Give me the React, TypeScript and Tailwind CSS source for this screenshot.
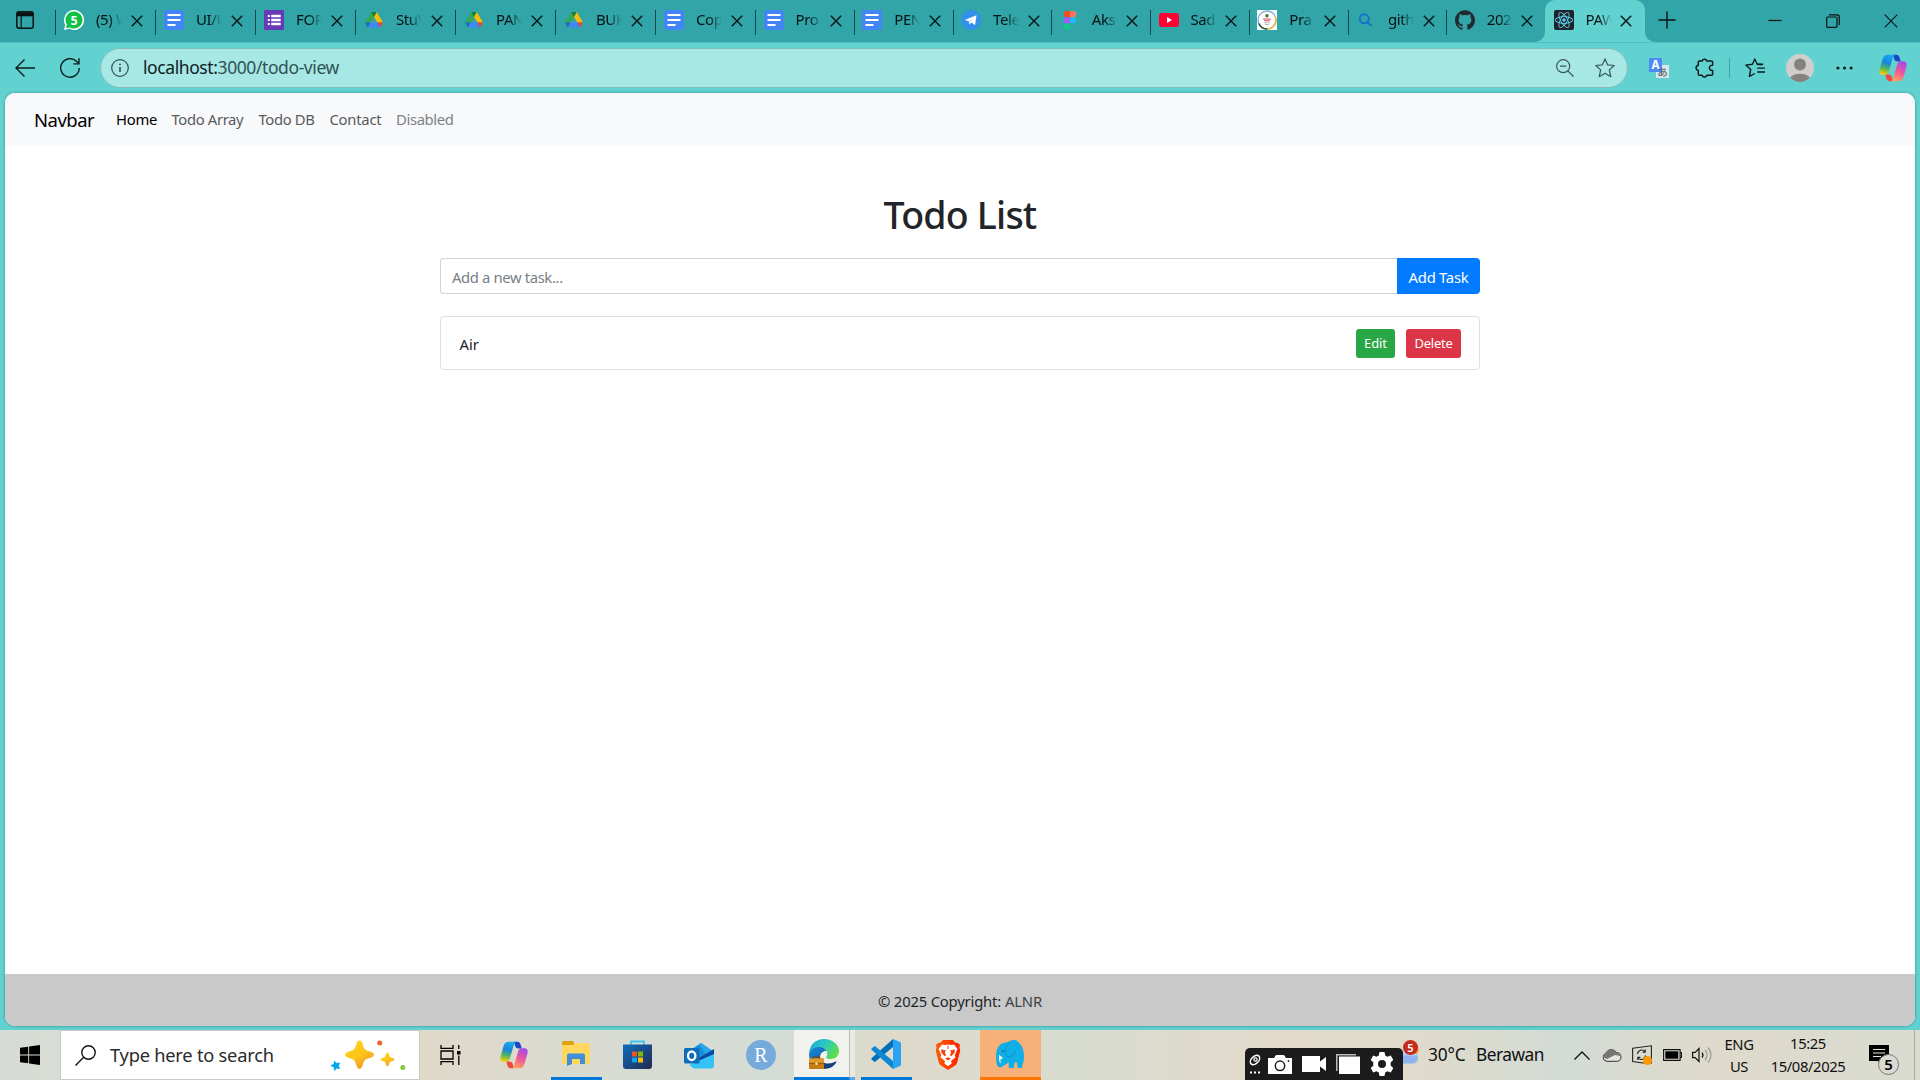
import type { ReactNode } from 'react';
import { SiGithub, SiReact } from 'react-icons/si';

/* ---------- favicons ---------- */

function WhatsAppIcon() {
  return (
    <svg viewBox="0 0 20 20" className="size-5">
      <path d="M10 0a10 10 0 1 1-4.7 18.8L0 20l1.2-5.2A10 10 0 0 1 10 0z" fill="#fff" />
      <path d="M10 1.5a8.5 8.5 0 1 1-4.2 15.9L2 18.2l.8-3.8A8.500 8.500 0 0 1 10 1.500z" fill="#0fc144" />
      <text x="10" y="14.500" textAnchor="middle" fontSize="12.500" fontWeight="700" fill="#fff">5</text>
    </svg>
  );
}

function DocsIcon() {
  return (
    <svg viewBox="0 0 20 20" className="size-5">
      <rect width="20" height="20" rx="1.5" fill="#4285f4" />
      <path d="M3.500 5.100h13M3.500 10.100h13M3.500 15.100h8" stroke="#fff" strokeWidth="2" />
    </svg>
  );
}

function FormsIcon() {
  return (
    <svg viewBox="0 0 20 20" className="size-5">
      <rect width="20" height="20" rx="1" fill="#673ab7" />
      <path d="M7.200 6h9.500M7.200 10h9.500M7.200 14h9.500" stroke="#fff" strokeWidth="2.400" />
      <path d="M3.800 6h2M3.800 10h2M3.800 14h2" stroke="#fff" strokeWidth="2.200" />
    </svg>
  );
}

function DriveIcon() {
  return (
    <svg viewBox="0 0 20 20" className="size-5">
      <path d="M7.300 2 1 12.500 4 17.500 10 7z" fill="#34a853" />
      <path d="M7.300 2h5.500L10 7z" fill="#188038" />
      <path d="M12.800 2 19 12.500h-5.500L10 7z" fill="#fbbc04" />
      <path d="M1 12.500h5.500L4 17.500z" fill="#1967d2" />
      <path d="M6.500 12.500h7L16 17.500H4z" fill="#4285f4" />
      <path d="M13.500 12.500H19L16 17.500z" fill="#ea4335" />
    </svg>
  );
}

function TelegramIcon() {
  return (
    <svg viewBox="0 0 20 20" className="size-5">
      <circle cx="10" cy="10" r="10" fill="#3390ec" />
      <path d="M3.800 10 15.500 5.200 14 15.200l-3.600-2.600-1.900 2-.6-3.400z" fill="#fff" />
      <path d="m7.900 11.200 5.200-3.700-4.200 4.400z" fill="#b9d8f7" />
    </svg>
  );
}

function FigmaIcon() {
  return (
    <svg viewBox="0 0 20 20" className="size-5">
      <path d="M10 1H7a3.100 3.100 0 0 0 0 6.300h3z" fill="#f24e1e" />
      <path d="M10 1h3a3.100 3.100 0 0 1 0 6.300h-3z" fill="#ff7262" />
      <path d="M10 7.300H7a3.100 3.100 0 0 0 0 6.300h3z" fill="#a259ff" />
      <circle cx="13" cy="10.400" r="3.100" fill="#1abcfe" />
      <path d="M10 13.600H7a3.100 3.100 0 1 0 3 3.100z" fill="#0acf83" />
    </svg>
  );
}

function YouTubeIcon() {
  return (
    <svg viewBox="0 0 20 20" className="size-5">
      <rect y="3" width="20" height="14" rx="3" fill="#ff0033" />
      <path d="m8 7 5 3-5 3z" fill="#fff" />
    </svg>
  );
}

function CampusIcon() {
  return (
    <svg viewBox="0 0 20 20" className="size-5">
      <rect width="20" height="20" fill="#fff" />
      <circle cx="10" cy="10" r="9" fill="#fff" stroke="#7fa9df" strokeWidth="1.300" />
      <path d="M18.300 6.500A9 9 0 0 1 10 19" fill="none" stroke="#f0b429" strokeWidth="1.300" />
      <path d="M1.800 13.500A9 9 0 0 0 10 19" fill="none" stroke="#244a2b" strokeWidth="1.400" />
      <circle cx="10" cy="5.800" r="1.700" fill="#3f7a2b" />
      <path d="M6 9h8M7 10.800h6" stroke="#d2505a" strokeWidth="1.100" />
      <path d="M7 12.800h6M8 14.500h4" stroke="#b9b9b9" strokeWidth="1" />
    </svg>
  );
}

function SearchFavicon() {
  return (
    <svg viewBox="0 0 20 20" className="size-5" fill="none" stroke="#1572c9" strokeWidth="1.900">
      <circle cx="8.300" cy="8.800" r="4.500" />
      <path d="m11.600 12.200 3.900 3.800" />
    </svg>
  );
}

function ReactFavicon() {
  return (
    <span className="flex size-5 items-center justify-center rounded-[2px] bg-[#20232a]">
      <SiReact className="size-[18px] text-[#61dafb]" />
    </span>
  );
}

/* ---------- shared icons ---------- */

function CopilotIcon({ id, className }: { id: string; className: string }) {
  return (
    <svg viewBox="0 0 28 28" className={className}>
      <defs>
        <linearGradient id={`${id}-a`} x1="0.500" y1="0" x2="0.300" y2="1">
          <stop offset="0" stopColor="#1aa7ee" />
          <stop offset="0.400" stopColor="#1785dc" />
          <stop offset="0.680" stopColor="#4fb560" />
          <stop offset="1" stopColor="#fbd000" />
        </linearGradient>
        <linearGradient id={`${id}-b`} x1="0.700" y1="0" x2="0.300" y2="1">
          <stop offset="0" stopColor="#a44bea" />
          <stop offset="0.500" stopColor="#f0569a" />
          <stop offset="1" stopColor="#ffa25a" />
        </linearGradient>
      </defs>
      <path d="M14 .8h3.600c1.500 0 2.400 1 2.900 2.500l1.300 4.200h-3.200c-2 0-3-1-3.500-2.800z" fill="#1748c8" />
      <path d="M14 27.200h-3.600c-1.500 0-2.400-1-2.900-2.500l-1.300-4.200h3.200c2 0 3 1 3.500 2.800z" fill="#f04a3e" />
      <path d="M8.800.8h7.700c-1.600.3-2.300 1.800-2.800 3.500l-3.600 12.400c-.7 2.500-2 4-4.400 4H3.500C.8 20.700-.2 18.500.5 15.500L3.600 5C4.500 2.200 6 .8 8.800.8z" fill={`url(#${id}-a)`} />
      <path d="M19.200 27.200h-7.700c1.600-.3 2.300-1.800 2.800-3.500l3.600-12.400c.7-2.500 2-4 4.400-4h2.200c2.700 0 3.700 2.200 3 5.200L24.400 23c-.9 2.800-2.400 4.200-5.200 4.200z" fill={`url(#${id}-b)`} />
    </svg>
  );
}

function CloseGlyph() {
  return (
    <svg viewBox="0 0 12 12" className="size-3" stroke="#0b1a1a" strokeWidth="1.500">
      <path d="m.8.8 10.400 10.400M11.200.8.8 11.200" />
    </svg>
  );
}

/* ---------- tab strip ---------- */

function TabBody({ icon, title }: { icon: ReactNode; title: string }) {
  return (
    <>
      {icon}
      <span className="mb-[2px] ml-[12px] w-[26px] overflow-hidden whitespace-nowrap text-[15px] leading-5 tracking-[-0.400px] text-[#061212] [mask-image:linear-gradient(to_right,black_50%,transparent)]">
        {title}
      </span>
      <span className="ml-[8.500px] mt-px flex">
        <CloseGlyph />
      </span>
    </>
  );
}

const wideTabs: { icon: ReactNode; title: string }[] = [
  { icon: <WhatsAppIcon />, title: '(5) W' },
  { icon: <DocsIcon />, title: 'UI/U' },
  { icon: <FormsIcon />, title: 'FOR' },
  { icon: <DriveIcon />, title: 'StuV' },
  { icon: <DriveIcon />, title: 'PAN' },
  { icon: <DriveIcon />, title: 'BUK' },
  { icon: <DocsIcon />, title: 'Cop' },
];

const narrowTabs: { icon: ReactNode; title: string }[] = [
  { icon: <DocsIcon />, title: 'Pro' },
  { icon: <DocsIcon />, title: 'PEN' },
  { icon: <TelegramIcon />, title: 'Tele' },
  { icon: <FigmaIcon />, title: 'Aks' },
  { icon: <YouTubeIcon />, title: 'Sad' },
  { icon: <CampusIcon />, title: 'Pra' },
  { icon: <SearchFavicon />, title: 'gith' },
  { icon: <SiGithub className="size-5 text-[#24292f]" />, title: '202' },
];

function TabStrip() {
  return (
    <div className="flex h-[42px] bg-[#31a5a8]">
      <div className="flex w-[55px] items-center pb-[2px] pl-4">
        <svg viewBox="0 0 18 18" className="size-[18px]" fill="none" stroke="#0a1212" strokeWidth="1.500">
          <rect x=".8" y=".8" width="16.400" height="16.400" rx="2.500" />
          <path d="M1 3.300h16" strokeWidth="4" />
          <path d="M5.200 5v12" strokeWidth="1.200" />
        </svg>
      </div>
      {wideTabs.map((t, i) => (
        <div key={i} className="flex h-[42px] w-[100px] items-center pb-[2px]">
          <span className="mr-2 mt-[4px] h-[25px] w-px bg-[#12494c]" />
          <TabBody icon={t.icon} title={t.title} />
        </div>
      ))}
      {narrowTabs.map((t, i) => (
        <div key={i} className="flex h-[42px] w-[98.750px] items-center pb-[2px]">
          <span className="mr-[7.500px] mt-[4px] h-[25px] w-px bg-[#12494c]" />
          <TabBody icon={t.icon} title={t.title} />
        </div>
      ))}
      <div className="relative flex h-[42px] w-[100px] items-center rounded-t-[10px] bg-[#62d2d1] pb-[2px] pl-[8.500px]">
        <svg viewBox="0 0 10 10" className="absolute -left-[10px] bottom-0 size-[10px]"><path d="M10 0v10H0A10 10 0 0 0 10 0z" fill="#62d2d1" /></svg>
        <svg viewBox="0 0 10 10" className="absolute -right-[10px] bottom-0 size-[10px]"><path d="M0 0v10h10A10 10 0 0 1 0 0z" fill="#62d2d1" /></svg>
        <TabBody icon={<ReactFavicon />} title="PAW" />
      </div>
      <div className="flex flex-1 items-center justify-between pl-[13px] pr-[22px]">
        <svg viewBox="0 0 18 18" className="mb-[3px] size-[18px]" stroke="#0a1212" strokeWidth="1.400"><path d="M9 .500v17M.500 9h17" /></svg>
        <div className="flex items-center gap-[44px]">
          <svg viewBox="0 0 14 14" className="size-[14px]" stroke="#0a1212" strokeWidth="1.200"><path d="M.5 6.500h13" /></svg>
          <svg viewBox="0 0 14 14" className="size-[14px]" fill="none" stroke="#0a1212" strokeWidth="1.200">
            <rect x=".7" y="3" width="10.300" height="10.300" rx="1" />
            <path d="M3 .8h8a2.300 2.300 0 0 1 2.300 2.300v8" />
          </svg>
          <svg viewBox="0 0 14 14" className="size-[14px]" stroke="#0a1212" strokeWidth="1.100"><path d="m.7.700 12.600 12.600M13.300.700.700 13.300" /></svg>
        </div>
      </div>
    </div>
  );
}

/* ---------- address bar ---------- */

function Toolbar() {
  return (
    <div className="flex h-[51px] items-center border-t border-[#4fc0c1] bg-[#62d2d1] pb-px text-[#0d1c1c]">
      <svg viewBox="0 0 20 18" className="ml-[15px] h-[18px] w-5" fill="none" stroke="currentColor" strokeWidth="1.400">
        <path d="M9.500.500 1 9l8.500 8.500M1 9h19" />
      </svg>
      <svg viewBox="0 0 20 20" className="ml-[25px] size-5" fill="none" stroke="currentColor" strokeWidth="1.400">
        <path d="M19.300 10A9.300 9.300 0 1 1 16.800 3.600L18.800 5.600" />
        <path d="M19 .300v5.600h-5.600" />
      </svg>
      <div className="ml-5 flex h-[40px] w-[1528px] items-center rounded-full border border-[#86bdbb] bg-[#a7e7e5]">
        <svg viewBox="0 0 18 18" className="ml-[10px] size-[18px]" fill="none" stroke="#33504f" strokeWidth="1.200">
          <circle cx="9" cy="9" r="8.300" />
          <path d="M9 8v5" strokeWidth="1.600" />
          <circle cx="9" cy="5.400" r=".6" fill="#33504f" strokeWidth=".7" />
        </svg>
        <span className="mb-px ml-[14px] whitespace-nowrap text-[17.500px] leading-6 tracking-[-0.410px] text-[#0e2222]">
          localhost:<span className="text-[#2f5352]">3000/todo-view</span>
        </span>
        <div className="ml-auto flex items-center gap-[21px] pr-[12px] text-[#3a5a59]">
          <svg viewBox="0 0 18 18" className="size-[18px]" fill="none" stroke="currentColor" strokeWidth="1.200">
            <circle cx="7.200" cy="7.200" r="6.500" />
            <path d="m12 12 5.500 5.500M4 7.200h6.400" />
          </svg>
          <svg viewBox="0 0 20 20" className="size-5" fill="none" stroke="currentColor" strokeWidth="1.250" strokeLinejoin="round">
            <path d="m10 .9 2.700 6 6.500.6-4.900 4.400 1.500 6.800L10 15.300l-5.800 3.400 1.500-6.800L.8 7.500l6.500-.6z" />
          </svg>
        </div>
      </div>
      <svg viewBox="0 0 20 20" className="ml-[21px] size-5">
        <rect x="7" y="7" width="13" height="13" fill="#dfe5e8" />
        <rect width="13" height="14" rx=".8" fill="#4c8bf5" />
        <text x="6.500" y="11" textAnchor="middle" fontSize="11.500" fontWeight="700" fill="#fff">A</text>
        <text x="13.500" y="18" textAnchor="middle" fontSize="10.500" fontWeight="500" fill="#546e7a" fontFamily="Noto Sans CJK JP">あ</text>
      </svg>
      <svg viewBox="0 0 20 20" className="ml-[25px] size-5" fill="none" stroke="currentColor" strokeWidth="1.500" strokeLinejoin="round">
        <path d="M6.500 3h1.600a2.500 2.500 0 0 1 4.800 0h4.700a1 1 0 0 1 1 1v3.200a2.700 2.700 0 1 0 0 5.300v3.800a1 1 0 0 1-1 1h-4.700a2.500 2.500 0 0 1-4.800 0H5.300a1 1 0 0 1-1-1v-3.800a2.700 2.700 0 0 1 0-5.300V4a1 1 0 0 1 1-1z" />
      </svg>
      <span className="ml-[15px] h-5 w-px bg-[#3fa3a4]" />
      <svg viewBox="0 0 20 20" className="ml-[15px] size-5" fill="none" stroke="currentColor" strokeWidth="1.400" strokeLinejoin="round">
        <path d="M17.500 6.800 12.200 6.200 9.800 1 7.400 6.200.800 7.100l4.900 4.400-1.300 7 5.300-3" />
        <path d="M12.200 10.100H20M12.200 14H20M12.200 6.300h6" />
      </svg>
      <svg viewBox="0 0 28 28" className="ml-[21px] size-7">
        <circle cx="14" cy="14" r="14" fill="#d1cfcd" />
        <circle cx="14" cy="10.500" r="6" fill="#858381" />
        <path d="M4 23.500a11 6.500 0 0 1 20 0A14 14 0 0 1 14 28a14 14 0 0 1-10-4.500z" fill="#858381" />
      </svg>
      <svg viewBox="0 0 17 4" className="ml-[22px] h-1 w-[17px]" fill="currentColor">
        <circle cx="1.900" cy="2" r="1.600" /><circle cx="8.500" cy="2" r="1.600" /><circle cx="15.100" cy="2" r="1.600" />
      </svg>
      <CopilotIcon id="cp-bar" className="ml-[26px] size-7" />
    </div>
  );
}

/* ---------- page ---------- */

function Page() {
  return (
    <div className="h-[937px] bg-[#62d2d1] px-[5px] pb-[4px]">
      <div className="flex h-[933px] flex-col overflow-hidden rounded-[10px] bg-white text-[14.800px] text-[#212529] shadow-[0_0_3px_rgba(0,60,60,0.5)]">
        <nav className="flex h-[53px] items-center bg-[#f8f9fb] pl-[29px]">
          <span className="w-[82px] text-[18.500px] tracking-[-0.500px] text-black">Navbar</span>
          <span className="w-[55.500px] tracking-[-0.250px] text-black">Home</span>
          <span className="w-[87px] tracking-[-0.350px] text-[#595a5b]">Todo Array</span>
          <span className="w-[71px] tracking-[-0.360px] text-[#595a5b]">Todo DB</span>
          <span className="w-[66.500px] tracking-[-0.230px] text-[#595a5b]">Contact</span>
          <span className="tracking-[-0.350px] text-[#7d8185]">Disabled</span>
        </nav>
        <main className="mx-auto flex w-[1040px] flex-1 flex-col pt-[45px]">
          <h1 className="text-center text-[37.500px] font-medium leading-[48px] tracking-[-0.800px]">Todo List</h1>
          <div className="mt-[19px] flex h-[36px]">
            <div className="flex flex-1 items-center rounded-l-[4px] border border-r-0 border-[#ced4da] pl-[11px] pt-[2px] tracking-[-0.360px] text-[#777e85]">
              Add a new task...
            </div>
            <button className="w-[83px] rounded-r-[4px] bg-[#007bff] pt-[2px] tracking-[-0.250px] text-white">Add Task</button>
          </div>
          <div className="mt-[22px] flex h-[54px] items-center rounded-[4px] border border-[#dfdfdf] pl-[18.500px] pr-[18px]">
            <span className="flex-1 pt-[2px]">Air</span>
            <button className="h-[29px] w-[39px] rounded-[3px] bg-[#28a745] pt-px text-[13px] tracking-[-0.100px] text-white">Edit</button>
            <button className="ml-[11px] h-[29px] w-[55px] rounded-[3px] bg-[#dc3545] pt-px text-[13px] tracking-[-0.230px] text-white">Delete</button>
          </div>
        </main>
        <footer className="flex h-[52px] items-center justify-center gap-1 bg-[#c9c9c9] pt-[2px] tracking-[-0.180px]">
          <span>© 2025 Copyright:</span>
          <span className="text-[#3d4246]">ALNR</span>
        </footer>
      </div>
    </div>
  );
}

/* ---------- taskbar ---------- */

function Sparkles() {
  return (
    <svg viewBox="0 0 76 31" className="h-[31px] w-[76px]">
      <defs>
        <linearGradient id="spark" x1="0" y1="0" x2=".6" y2="1">
          <stop offset="0" stopColor="#ffd51f" /><stop offset=".6" stopColor="#fdc518" /><stop offset="1" stopColor="#f09a2c" />
        </linearGradient>
      </defs>
      <path d="M29.500.500c1.800 0 2.600 1.600 3.200 3.800 1.400 5 2.200 5.800 7.200 7.200 2.200.6 4 1.400 4 3.200s-1.800 2.600-4 3.200c-5 1.400-5.800 2.200-7.200 7.200-.6 2.200-1.400 3.900-3.200 3.900s-2.600-1.700-3.200-3.900c-1.400-5-2.200-5.800-7.200-7.200-2.200-.6-4-1.400-4-3.200s1.800-2.600 4-3.200c5-1.400 5.800-2.200 7.200-7.200.6-2.200 1.400-3.800 3.200-3.800z" fill="url(#spark)" />
      <path d="M57.500 12.500c.9 0 1.200 1 1.500 2 .7 2.300 1 2.700 3.400 3.400 1 .3 2 .7 2 1.500s-1 1.200-2 1.500c-2.400.7-2.700 1.100-3.400 3.400-.3 1-.6 2-1.500 2s-1.200-1-1.500-2c-.7-2.300-1-2.700-3.400-3.400-1-.3-2-.7-2-1.500s1-1.200 2-1.500c2.400-.7 2.700-1.100 3.400-3.400.3-1 .6-2 1.500-2z" fill="url(#spark)" />
      <path d="m4 20.500 2.500 2.600 3.600-.6-1.400 3.400 1.600 3.200-3.500-.7L4 31l-.3-3.700L.200 25.500l3.500-1.400z" fill="#00a4ef" />
      <circle cx="49.700" cy="3" r="2.500" fill="#f1622c" />
      <circle cx="72.800" cy="27.500" r="2.500" fill="#8cc63f" />
    </svg>
  );
}

function FolderIcon() {
  return (
    <svg viewBox="0 0 28 26" className="h-[26px] w-7">
      <path d="M0 2a2 2 0 0 1 2-2h9l2 4H0z" fill="#dfa000" />
      <path d="M0 4h11l2-2h13a2 2 0 0 1 2 2v19H0z" fill="#ffd660" />
      <path d="M5 25V14.500A2 2 0 0 1 7 12.500h14a2 2 0 0 1 2 2V23h-5v-5h-8v5z" fill="#3f8fd9" />
    </svg>
  );
}

function StoreIcon() {
  return (
    <svg viewBox="0 0 29 29" className="size-[29px]">
      <defs><linearGradient id="store" x1="0" y1="0" x2="1" y2="1"><stop offset="0" stopColor="#0f6cbd" /><stop offset="1" stopColor="#232a50" /></linearGradient></defs>
      <path d="M8 7V1.500h13V7" fill="none" stroke="#3cc5f1" strokeWidth="1.800" />
      <path d="M0 4.500h29V26a3 3 0 0 1-3 3H3a3 3 0 0 1-3-3z" fill="url(#store)" />
      <path d="M9 11.500h5v5H9z" fill="#f25022" /><path d="M15 11.500h5v5h-5z" fill="#7fba00" />
      <path d="M9 17.500h5v5H9z" fill="#00a4ef" /><path d="M15 17.500h5v5h-5z" fill="#ffb900" />
    </svg>
  );
}

function OutlookIcon() {
  return (
    <svg viewBox="0 0 30 27" className="h-[27px] w-[30px]">
      <path d="M5 9 17 1l13 9v3L17 20 5 12z" fill="#1490df" />
      <path d="m15 2.200 2-1.200 13 9-7 4z" fill="#28a8ea" />
      <path d="m10 19 20-12v6L12 24z" fill="#0a4a9c" />
      <path d="M30 12v11.500a3 3 0 0 1-3 3H10L5 23z" fill="#35c3f5" />
      <rect y="6" width="15.500" height="15.500" rx="1.500" fill="#0f6cbd" />
      <ellipse cx="7.700" cy="13.800" rx="3.700" ry="4.300" fill="none" stroke="#fff" strokeWidth="2.300" />
    </svg>
  );
}

function EdgeWorkIcon() {
  return (
    <svg viewBox="0 0 30 30" className="size-[30px]">
      <defs>
        <linearGradient id="edge-top" x1="0" y1="0" x2="1" y2=".5"><stop offset="0" stopColor="#1a9fd8" /><stop offset=".5" stopColor="#2ac8c4" /><stop offset="1" stopColor="#5ddc50" /></linearGradient>
        <linearGradient id="edge-mid" x1="0" y1="0" x2=".6" y2="1"><stop offset="0" stopColor="#1a8fdd" /><stop offset="1" stopColor="#0c55a8" /></linearGradient>
      </defs>
      <path d="M15 11.500c-2.500 1-4 3.500-4 6 0 4.500 3.500 7 8 7 3.200 0 5.500-1 7.500-2 .6-.3 1.200.2.800.8C25 27.500 20.500 30 15 30 9 30 6 26 6 20z" fill="#153f78" />
      <path d="M0 15c1-5 5-7.500 9.500-7.500 4.500 0 7 2 7.800 4.500-3.500-.3-6.300 2.500-6.300 5.500 0 4 2 7 5 9L10 30C4 28 0 22 0 15z" fill="url(#edge-mid)" />
      <path d="M0 14C.800 5.500 7 0 15 0c9 0 15 6 15 12 0 5-3.800 8-8.300 8-3.500 0-4.900-1-4.500-2 1.300-1.500 1.300-3.500.600-5.500-1-3-4.300-4.500-7.800-4.500-4.500 0-8 2.500-10 6z" fill="url(#edge-top)" />
      <rect y="19.500" width="15" height="10.500" fill="#c77b16" />
      <path d="M0 19.500h15V24H0z" fill="#e29a2b" />
      <path d="M4.500 19.500v-1.700h6v1.700" fill="none" stroke="#7c4a0c" strokeWidth="1.200" />
      <path d="M0 24.300h15" stroke="#7c4a0c" strokeWidth=".8" />
      <circle cx="7.500" cy="24.800" r="1.300" fill="#ffe28a" />
    </svg>
  );
}

function CodeIcon() {
  return (
    <svg viewBox="0 0 30 30" className="size-[30px]">
      <path d="M22 0v8L4.500 22.500c-.5.400-1 .4-1.500 0L.800 20.700c-.6-.5-.6-1.300 0-1.800z" fill="#0070b8" />
      <path d="M22 30v-8L4.500 7.500c-.5-.4-1-.4-1.500 0L.800 9.300c-.6.500-.6 1.300 0 1.800z" fill="#0f88d2" />
      <path d="m22 0 7 3c.6.300 1 .800 1 1.500v21c0 .7-.4 1.200-1 1.500l-7 3z" fill="#2aa3f2" />
    </svg>
  );
}

function BraveIcon() {
  return (
    <svg viewBox="0 0 26 30" className="h-[30px] w-[26px]">
      <defs><linearGradient id="brave" x1="0" y1="0" x2="1" y2="0"><stop offset="0" stopColor="#ff5b00" /><stop offset="1" stopColor="#ff1f00" /></linearGradient></defs>
      <path d="M8 0h10l2.500 2.800c2-.4 3.500.7 4.500 2.200l-.6 2.500.9 3-3 11.500c-.5 2-1.500 3-3 4L13 30l-6.300-4c-1.500-1-2.500-2-3-4L.700 10.500l.9-3L1 5c1-1.500 2.500-2.600 4.500-2.200z" fill="url(#brave)" />
      <path d="M7 4.500l3 .6L13 4.500l3 .6 3-.6 3.500 4.500-2.700 6 .7 2.500-3.500 2.600-1 1.300.7 2.100-3.700 2.700-3.700-2.700.7-2.100-1-1.300-3.500-2.600.7-2.500L3.500 9z" fill="#fff" />
      <path d="m6 9.500 5 .8-1.200 1.700 1.200 3-1 1.500-3.500-3.500zM20 9.500l-5 .8 1.200 1.700-1.200 3 1 1.500 3.500-3.500zM10 18.500l3-1.200 3 1.200-3 2zM12.500 5.500h1V9h-1z" fill="#fb4212" />
    </svg>
  );
}

function ElephantIcon() {
  return (
    <svg viewBox="0 0 28 30" className="h-[30px] w-7">
      <path d="M1 26C-1 17 0 8 5 5c3-2 5.500-1 8-2.500C17 0 22 1 23.500 4.500 26.500 7 28 12 28 17.500c0 3-.5 6-1.500 8l-.6 3.500h-4.400l-.5-5.500h-2.500l-.5 5.500h-5l-.6-6C10.500 25 9 26.500 7.500 26.500 6 29 2 29 1 26z" fill="#10afe8" />
      <path d="M14 4c-4.500 2-6 8-3 13.500 3.500 1.500 7-1 8-5" fill="none" stroke="#0a8ec4" strokeWidth=".9" />
      <path d="M3.500 15.500c.5 1.500 1.500 2.200 3 2.500l-.5 2.200-1.500-.5v5c-1.500-2.500-2-6-1-9.200z" fill="#fff" />
      <path d="M6 12q1.200 1 2.700-.3" stroke="#0a4660" fill="none" />
    </svg>
  );
}

function RecorderWidget() {
  return (
    <div className="flex h-8 w-[158px] items-center self-end rounded-t-[5px] bg-[#1b1b1b] pl-[4px] text-white">
      <svg viewBox="0 0 12 21" className="h-[21px] w-3" fill="none" stroke="#fff">
        <ellipse cx="6" cy="6" rx="5.500" ry="3.600" transform="rotate(-45 6 6)" strokeWidth="1.500" />
        <circle cx="6.500" cy="5.500" r="1.600" strokeWidth="1.200" />
        <path d="M1 18.500h2M5 18.500h2M9 18.500h2" strokeWidth="2" />
      </svg>
      <svg viewBox="0 0 24 19" className="ml-[7px] h-[19px] w-6">
        <path d="M0 3h6l2-3h8l2 3h6v16H0z" fill="#fff" />
        <circle cx="12" cy="10.800" r="4.700" fill="none" stroke="#1b1b1b" strokeWidth="1.500" />
        <circle cx="20.500" cy="6" r=".9" fill="#1b1b1b" />
      </svg>
      <svg viewBox="0 0 24 16" className="ml-[10px] h-4 w-6" fill="#fff"><path d="M0 0h18v5.500L24 1v14l-6-4.500V16H0z" /></svg>
      <svg viewBox="0 0 24 20" className="ml-[10px] h-5 w-6">
        <path d="M.8 17V.800H20" fill="none" stroke="#bdbdbd" strokeWidth="1.500" />
        <path d="M3 2.500h21V20H3z" fill="#fff" />
      </svg>
      <svg viewBox="0 0 24 24" className="ml-[10px] size-6">
        <path d="M9.500 0h5l.7 3.500 2.300 1.300 3.300-1.200 2.500 4.300-2.600 2.400v3.400l2.600 2.400-2.500 4.300-3.300-1.200-2.300 1.300-.7 3.500h-5l-.7-3.500-2.300-1.300-3.300 1.200L.7 16.100l2.600-2.400v-3.400L.7 7.900l2.500-4.300 3.300 1.200 2.300-1.300zM12 8a4 4 0 1 0 0 8 4 4 0 0 0 0-8z" fill="#fff" fillRule="evenodd" />
      </svg>
    </div>
  );
}

function Taskbar() {
  return (
    <div className="flex h-[50px] bg-[linear-gradient(to_right,#d5dcd5_0px,#d8dcd4_60px,#e0d9ca_430px,#d6dcd3_650px,#d5dcd5_780px,#dedaca_900px,#d8dcd1_1080px,#e1dacb_1260px,#e0dacb_1400px,#d3dbd5_1570px,#dfdacb_1710px,#d9dbd1_1920px)] text-[#111]">
      <div className="flex w-[60px] items-center justify-center">
        <svg viewBox="0 0 20 20" className="size-5" fill="#000"><path d="M0 2.800 8.200 1.700v7.800H0zM9.100 1.500 20 0v9.500H9.100zM0 10.500h8.200v7.800L0 17.200zM9.100 10.500H20V20L9.100 18.500z" /></svg>
      </div>
      <div className="flex w-[360px] items-center border border-[#c8cac9] bg-white pl-[14px]">
        <svg viewBox="0 0 21 21" className="size-[21px]" fill="none" stroke="#111" strokeWidth="1.400"><circle cx="13.500" cy="7.500" r="6.700" /><path d="M8.700 12.300.500 20.500" /></svg>
        <span className="ml-[14px] w-[220px] whitespace-nowrap text-[18.300px] tracking-[-0.240px] text-[#2b2b2b]">Type here to search</span>
        <Sparkles />
      </div>
      <div className="flex w-[60px] items-center justify-center">
        <svg viewBox="0 0 21 20" className="h-5 w-[21px]" fill="none" stroke="#000" strokeWidth="1.300">
          <path d="M1 0v3.300h12V0M1 20v-3.300h12V20M1 6h12v8H1zM18.800 0v4M18.800 10.500V20" /><path d="M17 6h3.500v3.500H17z" fill="#000" stroke="none" />
        </svg>
      </div>
      <div className="flex w-[67px] items-center justify-center"><CopilotIcon id="cp-task" className="h-[28px] w-[30px]" /></div>
      <div className="ml-[4px] flex w-[51px] items-center justify-center border-b-[3px] border-[#0078d7] pr-px"><FolderIcon /></div>
      <div className="ml-[4px] flex w-[62px] items-center justify-center pb-px"><StoreIcon /></div>
      <div className="flex w-[62px] items-center justify-center"><OutlookIcon /></div>
      <div className="flex w-[62px] items-center justify-center">
        <span className="flex size-[30px] items-center justify-center rounded-full bg-[#75aadb] font-['Liberation_Serif'] text-[20px] leading-none text-white">R</span>
      </div>
      <div className="ml-[2px] flex w-[56px] items-center justify-center border-b-[3px] border-r border-b-[#0078d7] border-r-[#b9bbb8] bg-[#f1f1ee] pl-[4px]"><EdgeWorkIcon /></div>
      <div className="w-[5px] border-b-[3px] border-[#5aa5e8] bg-[#e9e9e3]" />
      <div className="ml-[6px] flex w-[51px] items-center justify-center border-b-[3px] border-[#0078d7] pr-[2px]"><CodeIcon /></div>
      <div className="flex w-[68px] items-center justify-center pb-px pl-1"><BraveIcon /></div>
      <div className="flex w-[61px] items-center justify-center border-b-[3px] border-[#ff7300] bg-[#f7b077] pr-[2px]"><ElephantIcon /></div>
      <div className="ml-[204px] flex"><RecorderWidget /></div>
      <div className="relative w-[25px]">
        <svg viewBox="0 0 16 32" className="absolute left-0 top-[8px] h-8 w-4">
          <circle cx="9" cy="12" r="6.500" fill="#f39a2b" />
          <path d="M0 13c5-3 9-1 10 2 3 0 5 2 5 5s-2 5.500-5 5.500H0z" fill="#8fb4f0" />
          <path d="M0 13c5-3 9-1 10 2 2 0 3.500 1 4.300 2.500H0z" fill="#b6d0fa" />
        </svg>
        <span className="absolute left-0 top-[10px] flex size-[15px] items-center justify-center rounded-full bg-[#c42b1c] text-[11px] font-semibold leading-none text-white">5</span>
      </div>
      <div className="flex items-center whitespace-nowrap text-[17.300px]">
        <span className="w-[48px] tracking-[-0.100px]">30°C</span>
        <span className="w-[98px] tracking-[-0.500px]">Berawan</span>
      </div>
      <div className="flex items-center">
        <svg viewBox="0 0 16 9" className="h-[9px] w-4" fill="none" stroke="#111" strokeWidth="1.300"><path d="m.5 8.500 7.500-7.500 7.500 7.500" /></svg>
        <svg viewBox="0 0 20 14" className="ml-[12px] h-[14px] w-5">
          <path d="M5 13.300A4.200 4.200 0 0 1 3.800 5.200 6 6 0 0 1 14.500 4.600a4.400 4.400 0 0 1 1 8.700z" fill="#e4e4e2" stroke="#333" strokeWidth="1" />
          <path d="M1 9C1.500 6.500 2.500 5.500 4 5.200A5.800 5.800 0 0 1 14.500 5C16.500 5 18 6 18.800 8L13 7 5 11z" fill="#777" />
        </svg>
        <svg viewBox="0 0 20 20" className="ml-[10px] size-5" fill="none" stroke="#222" strokeWidth="1.100">
          <path d="M.6 3.200 19.400.800V18H11L.6 16.500z" />
          <path d="M5.500 9A4.300 4.300 0 0 1 13 6.500M13.200 4.500v2.600h-2.600M13.500 10.500A4.300 4.300 0 0 1 6 13M5.800 15v-2.600h2.600" />
          <circle cx="15.500" cy="15.500" r="4.500" fill="#ff9800" stroke="none" />
        </svg>
        <svg viewBox="0 0 19 12" className="ml-[11px] h-3 w-[19px]" fill="none" stroke="#111" strokeWidth="1.100"><path d="M.6.600h16.500v10.800H.6zM17.500 3.500h1v5h-1" /><path d="M2.300 2.300h13v7.400h-13z" fill="#000" stroke="none" /></svg>
        <svg viewBox="0 0 20 18" className="ml-[10px] h-[18px] w-5" fill="none" stroke="#111" strokeWidth="1.200">
          <path d="M.6 6.300h2.600L7 2.500v13L3.200 11.700H.6z" /><path d="M10 6.500a4 4 0 0 1 0 5" /><path d="M13 4a7 7 0 0 1 0 10M16 1.500a11 11 0 0 1 0 15" stroke="#9a9b96" />
        </svg>
      </div>
      <div className="ml-[13px] flex w-[28px] flex-col items-center pt-[3px] text-[14.800px] leading-[22px] tracking-[-0.350px]">
        <span>ENG</span><span>US</span>
      </div>
      <div className="ml-[17px] flex w-[76px] flex-col items-center whitespace-nowrap pt-[2px] text-[14.800px] leading-[23px] tracking-[-0.400px]">
        <span>15:25</span><span>15/08/2025</span>
      </div>
      <div className="relative ml-auto flex w-[46px] border-r border-[#a9aba5]">
        <svg viewBox="0 0 20 20" className="absolute left-0 top-[15px] size-5"><path d="M0 0h20v16h-7v4l-4-4H0z" fill="#000" /><path d="M4 4.500h12M4 8h12M4 11.500h8" stroke="#e6e4da" strokeWidth="1" /></svg>
        <span className="absolute left-[9px] top-[24px] flex size-[21px] items-center justify-center rounded-full border border-[#777] bg-[#d9dbd2] text-[15px] font-semibold leading-none text-black">5</span>
      </div>
      <div className="w-[5px]" />
    </div>
  );
}

export default function App() {
  return (
    <div className="flex h-[1080px] w-[1920px] flex-col overflow-hidden font-['Noto_Sans',sans-serif]">
      <TabStrip />
      <Toolbar />
      <Page />
      <Taskbar />
    </div>
  );
}
